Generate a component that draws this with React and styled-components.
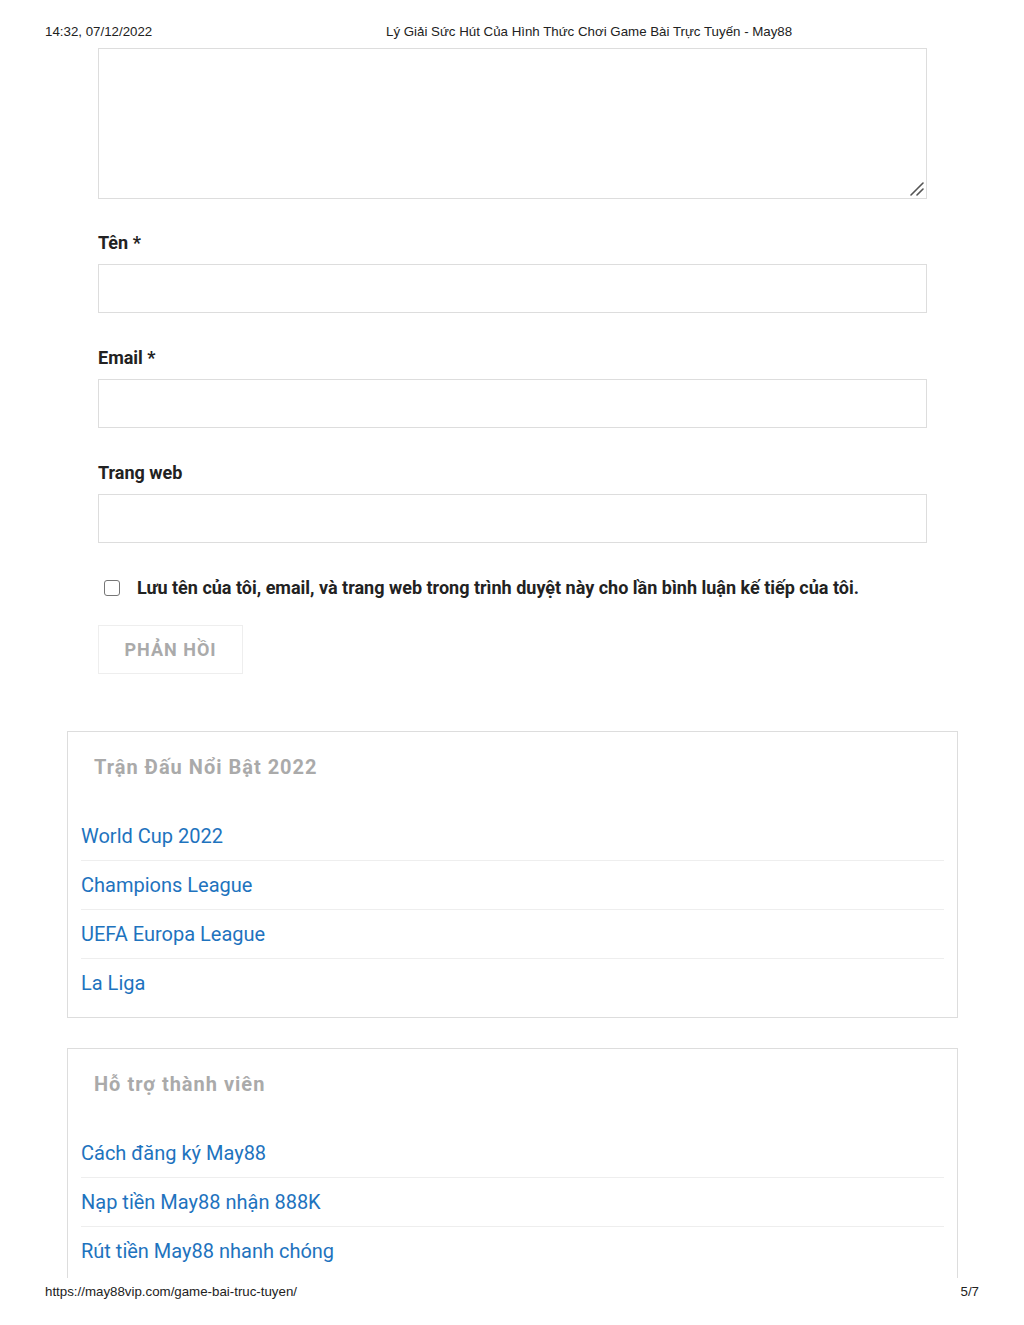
import styled, { createGlobalStyle } from "styled-components";

const Global = createGlobalStyle`
  html, body {
    margin: 0;
    padding: 0;
    background: #fff;
  }
  * {
    box-sizing: border-box;
  }
`;

const Page = styled.div`
  width: 1024px;
  height: 1325px;
  display: flex;
  flex-direction: column;
  background: #fff;
`;

const PrintBar = styled.div`
  display: grid;
  grid-template-columns: ${(p) => p.cols};
  padding: ${(p) => p.pad};
  height: ${(p) => p.h}px;
  flex: none;
  font-family: "Liberation Sans", Arial, sans-serif;
  font-size: 13.3px;
  line-height: 16px;
  color: #222;
`;

const Right = styled.span`
  text-align: right;
`;

const Sheet = styled.div`
  height: 1230px;
  flex: none;
  overflow: hidden;
  font-family: Roboto, "Noto Sans", sans-serif;
  color: #222;
`;

const Form = styled.form`
  margin: 0 97px 0 98px;
  display: flex;
  flex-direction: column;
`;

const TextWrap = styled.div`
  position: relative;
  margin-bottom: 32px;
`;

const TextArea = styled.textarea`
  display: block;
  width: 100%;
  height: 151px;
  border: 1px solid #ddd;
  background: #fff;
  resize: none;
`;

const Grip = styled.svg`
  position: absolute;
  right: 3px;
  bottom: 3px;
  pointer-events: none;
`;

const Label = styled.label`
  display: block;
  font-size: 18px;
  font-weight: 700;
  line-height: 24px;
  margin-bottom: 9px;
  color: #222;
`;

const Input = styled.input`
  display: block;
  width: 100%;
  height: 49px;
  border: 1px solid #ddd;
  background: #fff;
  margin-bottom: ${(p) => p.gap}px;
`;

const CheckRow = styled.div`
  display: flex;
  align-items: center;
  gap: 17px;
  padding-left: 6px;
  height: 24px;
  margin-bottom: 25px;
`;

const Box = styled.span`
  width: 16px;
  height: 16px;
  border: 1px solid #767676;
  border-radius: 3px;
  flex: none;
`;

const CheckText = styled.span`
  font-size: 18px;
  font-weight: 700;
  line-height: 24px;
`;

const Submit = styled.button`
  align-self: flex-start;
  width: 145px;
  height: 49px;
  border: 1px solid #eee;
  background: #fff;
  font-family: Roboto, "Noto Sans", sans-serif;
  font-size: 18px;
  font-weight: 700;
  letter-spacing: 1px;
  color: #aaa;
  margin-bottom: 57px;
`;

const Widget = styled.aside`
  margin: 0 66px ${(p) => p.gap}px 67px;
  border: 1px solid #ddd;
  padding: 20px 13px 10px;
`;

const WidgetTitle = styled.h2`
  margin: 0 0 30px 13px;
  font-size: 20px;
  line-height: 30px;
  font-weight: 700;
  letter-spacing: 1px;
  color: #aaa;
`;

const LinkList = styled.ul`
  list-style: none;
  margin: 0;
  padding: 0;
`;

const Item = styled.li`
  padding: 10px 0;
  font-size: 20px;
  line-height: 28px;
  height: 49px;
  border-bottom: 1px solid #eee;
  &:last-child {
    border-bottom: none;
    height: 48px;
  }
  a {
    color: #1e73be;
    text-decoration: none;
  }
`;

const widgets = [
  {
    title: "Trận Đấu Nổi Bật 2022",
    links: ["World Cup 2022", "Champions League", "UEFA Europa League", "La Liga"],
  },
  {
    title: "Hỗ trợ thành viên",
    links: ["Cách đăng ký May88", "Nạp tiền May88 nhận 888K", "Rút tiền May88 nhanh chóng"],
  },
];

export default function App() {
  return (
    <Page>
      <Global />
      <PrintBar cols="341px 1fr" pad="24px 45px 0" h={48}>
        <span>14:32, 07/12/2022</span>
        <span>Lý Giải Sức Hút Của Hình Thức Chơi Game Bài Trực Tuyến - May88</span>
      </PrintBar>
      <Sheet>
        <Form onSubmit={(e) => e.preventDefault()}>
          <TextWrap>
            <TextArea />
            <Grip width="14" height="14" viewBox="0 0 14 14">
              <path d="M1 13 L13 1 M7 13 L13 7" stroke="#555" strokeWidth="1.6" strokeLinecap="round" />
            </Grip>
          </TextWrap>
          <Label>Tên *</Label>
          <Input type="text" gap={33} />
          <Label>Email *</Label>
          <Input type="email" gap={33} />
          <Label>Trang web</Label>
          <Input type="url" gap={33} />
          <CheckRow>
            <Box />
            <CheckText>
              Lưu tên của tôi, email, và trang web trong trình duyệt này cho lần bình luận kế tiếp của tôi.
            </CheckText>
          </CheckRow>
          <Submit type="submit">PHẢN HỒI</Submit>
        </Form>
        {widgets.map((w) => (
          <Widget key={w.title} gap={30}>
            <WidgetTitle>{w.title}</WidgetTitle>
            <LinkList>
              {w.links.map((l) => (
                <Item key={l}>
                  <a href="#">{l}</a>
                </Item>
              ))}
            </LinkList>
          </Widget>
        ))}
      </Sheet>
      <PrintBar cols="1fr auto" pad="6px 45px 0" h={47}>
        <span>https://may88vip.com/game-bai-truc-tuyen/</span>
        <Right>5/7</Right>
      </PrintBar>
    </Page>
  );
}
